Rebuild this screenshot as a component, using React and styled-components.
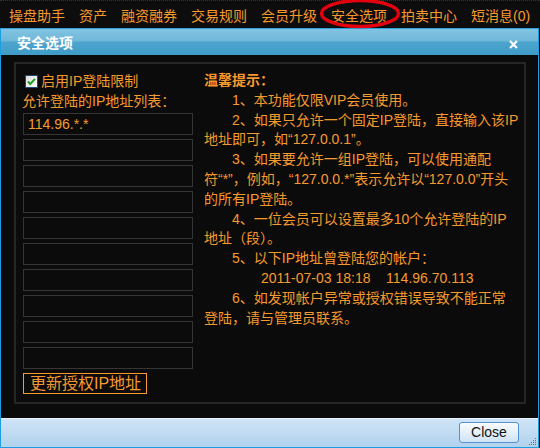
import React from "react";
import styled, { createGlobalStyle } from "styled-components";

const GlobalStyle = createGlobalStyle`
  html, body { margin: 0; padding: 0; background: #0c0c0c; }
  body { font-family: "Liberation Sans", "Noto Sans CJK SC", sans-serif; }
  * { box-sizing: border-box; }
`;

const ORANGE = "#f79a2e";
const FONT = `"Liberation Sans", "Noto Sans CJK SC", sans-serif`;

const Page = styled.div`
  width: 540px;
  height: 448px;
  display: flex;
  flex-direction: column;
  background: #0c0c0c;
  overflow: hidden;
`;

const MenuBar = styled.nav`
  height: 28px;
  flex: none;
  display: flex;
  align-items: center;
  gap: 14px;
  padding: 3px 0 0 9px;
  border-top: 1px dotted #333;
  background: #0d0d0d;
  position: relative;
  z-index: 2;
`;

const MenuItem = styled.span`
  position: relative;
  font-family: ${FONT};
  font-size: 14px;
  line-height: 20px;
  color: ${ORANGE};
  white-space: nowrap;
`;

const Ellipse = styled.svg`
  position: absolute;
  left: -11px;
  top: -7px;
  width: 80px;
  height: 29px;
  overflow: visible;
  pointer-events: none;
`;

const Dialog = styled.section`
  width: 539px;
  flex: 1;
  display: flex;
  flex-direction: column;
  border-left: 1px solid #1c9de0;
  border-right: 1px solid #1c9de0;
  border-top: 1px solid #2aa0da;
  border-bottom: 1px solid #1c9de0;
  min-height: 0;
`;

const TitleBar = styled.header`
  height: 26px;
  flex: none;
  display: flex;
  align-items: center;
  justify-content: space-between;
  padding: 0 20px 0 16px;
  background: linear-gradient(#82c3e1 0%, #70b8da 46%, #4ca5ce 50%, #3f9cc7 100%);
`;

const Title = styled.h1`
  margin: 0;
  font-family: ${FONT};
  font-size: 14px;
  font-weight: bold;
  color: #fff;
  line-height: 18px;
  margin-top: 1px;
`;

const CloseX = styled.svg`
  width: 9px;
  height: 9px;
  margin-top: 4px;
`;

const Body = styled.div`
  flex: 1;
  background: #0b0b0b;
  padding: 7px 12px 14px 13px;
  min-height: 0;
`;

const Panel = styled.div`
  height: 100%;
  border: 2px solid #262626;
  display: flex;
  padding: 7px 0 0 6px;
`;

const LeftCol = styled.div`
  width: 171px;
  flex: none;
  display: flex;
  flex-direction: column;
`;

const TextLine = styled.div`
  font-family: ${FONT};
  font-size: 14px;
  line-height: 20px;
  height: 20px;
  color: ${ORANGE};
  white-space: nowrap;
  display: flex;
  align-items: center;
`;

const CheckRow = styled(TextLine)`
  padding-left: 3px;
  gap: 3px;
`;

const InputList = styled.div`
  display: flex;
  flex-direction: column;
  gap: 4px;
  margin: 2px 0 0 1px;
`;

const IpInput = styled.div`
  width: 170px;
  height: 22px;
  border: 1px solid #363636;
  background: #0b0b0b;
  font-family: ${FONT};
  font-size: 14px;
  line-height: 20px;
  color: ${ORANGE};
  padding-left: 4px;
`;

const UpdateButton = styled.button`
  align-self: flex-start;
  margin: 4px 0 0 1px;
  height: 21px;
  padding: 0 5px 0 6px;
  border: 1px solid ${ORANGE};
  background: transparent;
  color: ${ORANGE};
  font-family: ${FONT};
  font-size: 16px;
  line-height: 19px;
  white-space: nowrap;
`;

const RightCol = styled.div`
  margin-left: 11px;
  display: flex;
  flex-direction: column;
`;

const Line = styled.div`
  font-family: ${FONT};
  font-size: 14px;
  line-height: 19.8px;
  height: 19.8px;
  color: ${ORANGE};
  white-space: pre;
  padding-left: ${(p) => p.$indent || 0}px;
  font-weight: ${(p) => (p.$bold ? "bold" : "normal")};
`;

const Footer = styled.footer`
  height: 29px;
  flex: none;
  display: flex;
  align-items: center;
  justify-content: flex-end;
  padding: 0 19px 1px 0;
  border-top: 1px solid #eaf3fb;
  background: linear-gradient(#cfe4f6, #b2d2ee);
  position: relative;
`;

const CloseButton = styled.button`
  width: 60px;
  height: 21px;
  border: 1px solid #5593cd;
  border-radius: 3px;
  background: linear-gradient(#f7fbfe 0%, #e4f0fa 50%, #cfe3f5 100%);
  font-family: ${FONT};
  font-size: 14px;
  line-height: 17px;
  color: #111;
  padding: 0;
`;

const Grip = styled.svg`
  position: absolute;
  right: 1px;
  bottom: 1px;
  width: 9px;
  height: 9px;
`;

function Checkbox() {
  return (
    <svg width="13" height="13" viewBox="0 0 13 13">
      <defs>
        <linearGradient id="cbg" x1="0" y1="0" x2="1" y2="1">
          <stop offset="0" stopColor="#dcdcdc" />
          <stop offset="1" stopColor="#ffffff" />
        </linearGradient>
      </defs>
      <rect x="0.5" y="0.5" width="12" height="12" fill="url(#cbg)" stroke="#1d4a72" />
      <path d="M3 6.5 L5.3 9 L10 3.8" fill="none" stroke="#21a121" strokeWidth="2" />
    </svg>
  );
}

const menu = ["操盘助手", "资产", "融资融券", "交易规则", "会员升级", "安全选项", "拍卖中心", "短消息(0)"];

export default function App() {
  return (
    <>
      <GlobalStyle />
      <Page>
        <MenuBar>
          {menu.map((m) => (
            <MenuItem key={m}>
              {m}
              {m === "安全选项" && (
                <Ellipse viewBox="0 0 80 29">
                  <ellipse cx="40" cy="14.5" rx="38.5" ry="13" fill="none" stroke="#e5000f" strokeWidth="3.4" />
                </Ellipse>
              )}
            </MenuItem>
          ))}
        </MenuBar>
        <Dialog>
          <TitleBar>
            <Title>安全选项</Title>
            <CloseX viewBox="0 0 9 9">
              <path d="M1 1 L8 8 M8 1 L1 8" stroke="#fff" strokeWidth="2.2" />
            </CloseX>
          </TitleBar>
          <Body>
            <Panel>
              <LeftCol>
                <CheckRow>
                  <Checkbox />
                  <span>启用IP登陆限制</span>
                </CheckRow>
                <TextLine>允许登陆的IP地址列表：</TextLine>
                <InputList>
                  <IpInput>114.96.*.*</IpInput>
                  {Array.from({ length: 9 }).map((_, i) => (
                    <IpInput key={i} />
                  ))}
                </InputList>
                <UpdateButton>更新授权IP地址</UpdateButton>
              </LeftCol>
              <RightCol>
                <Line $bold>温馨提示：</Line>
                <Line $indent={28}>1、本功能仅限VIP会员使用。</Line>
                <Line $indent={28}>2、如果只允许一个固定IP登陆，直接输入该IP</Line>
                <Line>地址即可，如“127.0.0.1”。</Line>
                <Line $indent={28}>3、如果要允许一组IP登陆，可以使用通配</Line>
                <Line>符“*”，例如，“127.0.0.*”表示允许以“127.0.0”开头</Line>
                <Line>的所有IP登陆。</Line>
                <Line $indent={28}>4、一位会员可以设置最多10个允许登陆的IP</Line>
                <Line>地址（段）。</Line>
                <Line $indent={28}>5、以下IP地址曾登陆您的帐户：</Line>
                <Line $indent={57}>2011-07-03 18:18    114.96.70.113</Line>
                <Line $indent={28}>6、如发现帐户异常或授权错误导致不能正常</Line>
                <Line>登陆，请与管理员联系。</Line>
              </RightCol>
            </Panel>
          </Body>
          <Footer>
            <CloseButton>Close</CloseButton>
            <Grip viewBox="0 0 9 9">
              {[
                [7, 1], [5, 3], [7, 3], [3, 5], [5, 5], [7, 5], [1, 7], [3, 7], [5, 7], [7, 7],
              ].map(([x, y]) => (
                <rect key={`${x}-${y}`} x={x} y={y} width="1" height="1" fill="#3d7ab0" />
              ))}
            </Grip>
          </Footer>
        </Dialog>
      </Page>
    </>
  );
}
